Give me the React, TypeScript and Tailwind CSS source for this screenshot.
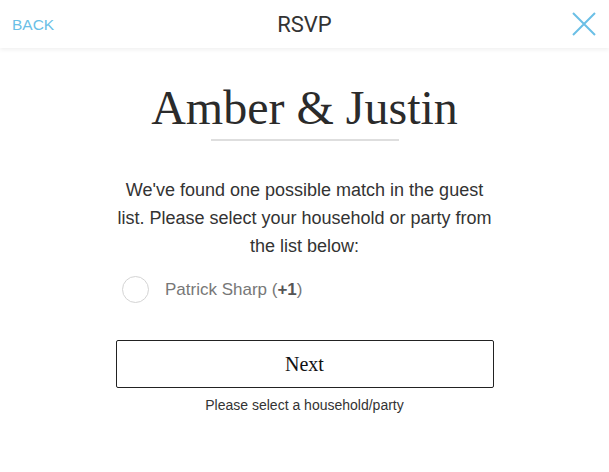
import React, { useState } from 'react';

export default function App() {
  const [selected, setSelected] = useState(false);

  return (
    <div className="min-h-screen bg-white font-['Liberation_Sans',Arial,sans-serif]">
      {/* Header */}
      <header className="relative flex h-12 items-center justify-between px-3 shadow-[0_2px_4px_rgba(0,0,0,0.06)]">
        <button className="pt-0.5 text-[15.5px] text-[#6bbfe6]">BACK</button>
        <h1 className="absolute left-1/2 -translate-x-1/2 font-['Roboto',sans-serif] text-[22px] text-[#333]">RSVP</h1>
        <button className="mr-[-1px] flex h-12 w-7 items-center justify-center text-[#6bbfe6]">
          <svg width="24" height="24" viewBox="0 0 24 24" fill="none" stroke="currentColor" strokeWidth="2">
            <path d="M1 1 L23 23 M23 1 L1 23" />
          </svg>
        </button>
      </header>

      <main className="flex flex-col items-center">
        <h2 className="mt-[32px] font-['Liberation_Serif',serif] text-[48px] leading-[56px] text-[#2b2b2b]">Amber &amp; Justin</h2>
        <div className="mt-[3px] h-[2px] w-[188px] bg-[#dedede]" />

        <p className="mt-[35px] w-[380px] text-center text-[18px] leading-[28px] text-[#333]">
          We've found one possible match in the guest list. Please select your household or party from the list below:
        </p>

        <label className="mt-[16px] flex w-[377px] cursor-pointer items-center gap-[16px] pl-[6px]">
          <span
            onClick={() => setSelected(!selected)}
            className="flex h-[27px] w-[27px] items-center justify-center rounded-full border border-[#d4d4d4]"
          >
            {selected && <span className="h-3 w-3 rounded-full bg-[#6bbfe6]" />}
          </span>
          <span className="text-[17px] text-[#777]">
            Patrick Sharp (<b className="text-[#555]">+1</b>)
          </span>
        </label>

        <button className="mt-[37px] h-[48px] w-[378px] rounded-[2px] border border-[#222] font-['Liberation_Serif',serif] text-[20px] text-[#111]">
          Next
        </button>
        <p className="mt-[7px] text-[14px] text-[#333]">Please select a household/party</p>
      </main>
    </div>
  );
}
